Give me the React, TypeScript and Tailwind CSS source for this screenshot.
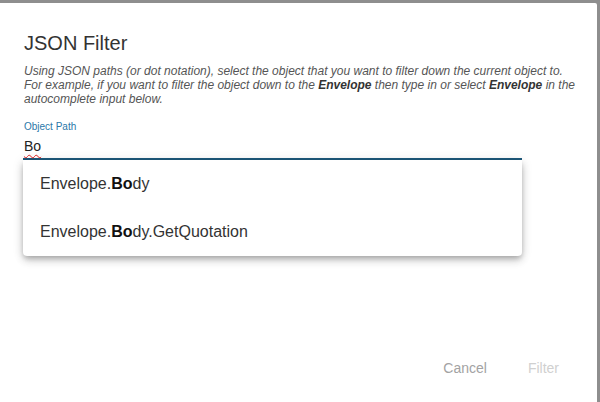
import React from "react";

export default function App() {
  return (
    <div
      className="w-[600px] h-[402px] bg-[#8e8e8e] pt-[3px] pr-[3px] overflow-hidden"
      style={{ fontFamily: '"Liberation Sans", Arial, sans-serif' }}
    >
      <div className="relative h-full bg-white flex flex-col rounded-tr-[2px]">
        <div className="pl-[24px] pr-[18px] pt-[28px]">
          <h1 className="text-[20px] leading-[24px] text-[#333] font-normal">JSON Filter</h1>
          <p className="mt-[9px] text-[12px] leading-[14px] italic text-[#555]">
            Using JSON paths (or dot notation), select the object that you want to filter down the current object to.
            For example, if you want to filter the object down to the <b className="text-[#333]">Envelope</b> then type in or select{" "}
            <b className="text-[#333]">Envelope</b> in the autocomplete input below.
          </p>
        </div>

        <div className="relative ml-[23px] w-[499px] mt-[15px]">
          <div className="pl-[1px] text-[10px] leading-[12px] text-[#2a78a8]">Object Path</div>
          <div className="mt-[4px] pl-[1px] pb-[3px] text-[14px] leading-[18px] text-[#222]">
            <span className="underline decoration-wavy decoration-[#e02020] decoration-1 underline-offset-[3px]">Bo</span>
          </div>
          <div className="h-[2px] bg-[#1f5a7c]" />

          <div className="absolute left-0 right-0 top-full bg-white rounded-b-[4px] shadow-[0_3px_5px_-1px_rgba(0,0,0,0.2),0_5px_8px_0_rgba(0,0,0,0.14),0_1px_12px_0_rgba(0,0,0,0.12)]">
            <div className="h-[48px] flex items-center pl-[17px] text-[16px] text-[#333]">
              Envelope.<b className="text-[#111]">Bo</b>dy
            </div>
            <div className="h-[48px] flex items-center pl-[17px] text-[16px] text-[#333]">
              Envelope.<b className="text-[#111]">Bo</b>dy.GetQuotation
            </div>
          </div>
        </div>

        <div className="mt-auto pb-[26px] pr-[38px] flex justify-end items-center gap-[41px] text-[14px] leading-[16px]">
          <span className="text-[#a3a3a3]">Cancel</span>
          <span className="text-[#d0d0d0]">Filter</span>
        </div>
      </div>
    </div>
  );
}
